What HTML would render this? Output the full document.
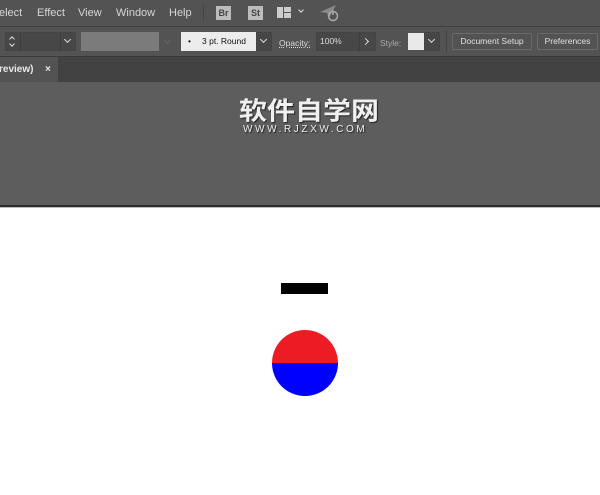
<!DOCTYPE html>
<html><head><meta charset="utf-8"><style>
*{margin:0;padding:0;box-sizing:border-box}
body{width:600px;height:495px;overflow:hidden;background:#fff;font-family:"Liberation Sans","Noto Sans CJK SC",sans-serif;position:relative}
.a{position:absolute}
.menu{left:0;top:0;width:600px;height:26px;background:#535353;color:#d6d6d6;font-size:11px}
.menu span{position:absolute;top:7px}
.ctrl{left:0;top:26px;width:600px;height:31px;background:#535353;border-top:1px solid #3f3f3f;border-bottom:1px solid #3a3a3a}
.box{position:absolute;border:1px solid #444;background:#474747}
.btn{position:absolute;top:33px;height:17px;border:1px solid #6a6a6a;border-radius:2px;color:#e0e0e0;font-size:8.5px;line-height:15px;text-align:center;background:#535353}
.lbl{position:absolute;color:#cfcfcf;font-size:8.5px;top:38px}
.chev{position:absolute;width:5px;height:5px;border-right:1.3px solid #ddd;border-bottom:1.3px solid #ddd;transform:rotate(45deg)}
</style></head><body>
<div class="a menu">
<span style="left:-1px">elect</span><span style="left:37px">Effect</span><span style="left:78px">View</span><span style="left:116px">Window</span><span style="left:169px">Help</span>
</div>
<div class="a" style="left:203px;top:5px;width:1px;height:16px;background:#444"></div>
<div class="a" style="left:216px;top:6px;width:15px;height:14px;background:#bcbcbc;color:#444;font-size:9px;font-weight:bold;text-align:center;line-height:14px">Br</div>
<div class="a" style="left:248px;top:6px;width:15px;height:14px;background:#bcbcbc;color:#444;font-size:9px;font-weight:bold;text-align:center;line-height:14px">St</div>
<div class="a" style="left:277px;top:7px;width:6px;height:11px;background:#ccc"></div>
<div class="a" style="left:284px;top:7px;width:7px;height:5px;background:#ccc"></div>
<div class="a" style="left:284px;top:13px;width:7px;height:5px;background:#ccc"></div>
<div class="chev" style="left:299px;top:8px;width:4px;height:4px"></div>
<svg class="a" style="left:319px;top:4px" width="22" height="18" viewBox="0 0 22 18"><path d="M1 8 L17 1 L10 14 L8 9 Z" fill="#8a8a8a"/><circle cx="14" cy="12" r="4.5" fill="none" stroke="#aaa" stroke-width="1.5"/><path d="M14 6.5V11" stroke="#aaa" stroke-width="1.5"/></svg>

<div class="a ctrl"></div>
<div class="box" style="left:5px;top:32px;width:71px;height:19px;border-radius:2px"></div>
<div class="a" style="left:20px;top:33px;width:1px;height:17px;background:#3d3d3d"></div>
<div class="a" style="left:60px;top:33px;width:1px;height:17px;background:#3d3d3d"></div>
<div class="chev" style="left:10px;top:37px;width:4px;height:4px;transform:rotate(-135deg)"></div>
<div class="chev" style="left:10px;top:42px;width:4px;height:4px"></div>
<div class="chev" style="left:65px;top:37px"></div>
<div class="a" style="left:81px;top:32px;width:78px;height:19px;background:#7b7b7b"></div>
<div class="chev" style="left:165px;top:38px;border-color:#666"></div>
<div class="a" style="left:181px;top:32px;width:75px;height:19px;background:#ececec;color:#111;font-size:8.5px;line-height:19px"><span style="position:absolute;left:7px">•</span><span style="position:absolute;left:21px">3 pt. Round</span></div>
<div class="box" style="left:256px;top:32px;width:16px;height:19px"></div>
<div class="chev" style="left:261px;top:37px"></div>
<div class="lbl" style="left:279px;color:#ddd;text-decoration:underline dotted">Opacity:</div>
<div class="box" style="left:316px;top:32px;width:60px;height:19px;color:#ddd;font-size:8.5px;line-height:17px;padding-left:3px">100%</div>
<div class="a" style="left:359px;top:33px;width:1px;height:17px;background:#3d3d3d"></div>
<div class="chev" style="left:363px;top:39px;transform:rotate(-45deg)"></div>
<div class="lbl" style="left:380px;color:#aaa">Style:</div>
<div class="a" style="left:408px;top:33px;width:16px;height:17px;background:#e9e9e9"></div>
<div class="box" style="left:424px;top:32px;width:16px;height:19px"></div>
<div class="chev" style="left:429px;top:37px"></div>
<div class="a" style="left:446px;top:31px;width:1px;height:21px;background:#444"></div>
<div class="btn" style="left:452px;width:80px">Document Setup</div>
<div class="btn" style="left:537px;width:61px">Preferences</div>

<div class="a" style="left:0;top:57px;width:600px;height:25px;background:#424242"></div>
<div class="a" style="left:0;top:57px;width:58px;height:25px;background:#535353;color:#e8e8e8;font-size:10px;font-weight:bold;line-height:25px"><span style="position:absolute;left:-1px">review)</span><span style="position:absolute;left:45px">×</span></div>
<div class="a" style="left:0;top:82px;width:600px;height:123px;background:#5d5d5d"></div>
<div class="a" style="left:0;top:205px;width:600px;height:2px;background:#2e2e2e"></div>
<div class="a" style="left:0;top:207px;width:600px;height:1px;background:#bbb"></div>
<div class="a" style="left:239px;top:96px;width:150px;color:#f0f0f0;font-size:28px;font-weight:bold;letter-spacing:0;line-height:30px;text-shadow:1px 1px 1px #222;font-family:'Noto Sans CJK SC',sans-serif;transform:scaleY(0.9);transform-origin:top left">软件自学网</div>
<div class="a" style="left:243px;top:124px;color:#eee;font-size:10px;letter-spacing:2.6px;line-height:11px;text-shadow:1px 1px 1px #222">WWW.RJZXW.COM</div>

<div class="a" style="left:281px;top:283px;width:47px;height:11px;background:#000"></div>
<div class="a" style="left:272px;top:330px;width:66px;height:66px;border-radius:50%;overflow:hidden;background:linear-gradient(#ed1c24 50%,#0000ff 50%)"></div>
</body></html>
